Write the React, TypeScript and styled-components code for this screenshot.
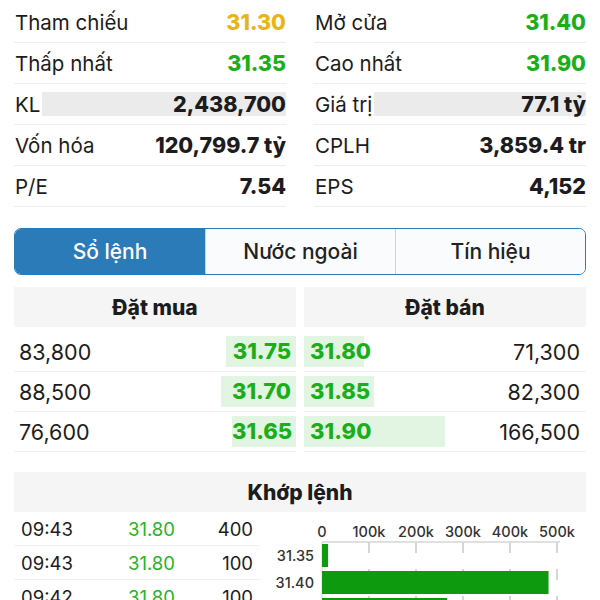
import React from "react";
import styled, { createGlobalStyle } from "styled-components";

const GlobalStyle = createGlobalStyle`
  body {
    margin: 0;
    background: #ffffff;
    font-family: Inter, "Noto Sans", sans-serif;
    color: #1c1c1e;
    overflow: hidden;
  }
`;

const Page = styled.div`
  width: 600px;
  height: 600px;
  padding: 2px 14px 0;
  box-sizing: border-box;
  overflow: hidden;
`;

const StatGrid = styled.div`
  display: grid;
  grid-template-columns: 1fr 1fr;
  column-gap: 28px;
`;

const StatRow = styled.div`
  display: flex;
  align-items: center;
  height: 41px;
  box-sizing: border-box;
  border-bottom: 1px solid #efefef;
`;

const StatLabel = styled.span`
  padding-left: 1px;
  font-size: 20.5px;
  white-space: nowrap;
`;

const StatValue = styled.span<{ $color?: string; $shaded?: boolean }>`
  flex: 1;
  margin-left: 2px;
  height: 24px;
  line-height: 24px;
  text-align: right;
  font-size: 21.5px;
  font-weight: 800;
  white-space: nowrap;
  color: ${(p) => p.$color || "#1c1c1e"};
  background: ${(p) => (p.$shaded ? "#ebebeb" : "transparent")};
`;

const Tabs = styled.div`
  display: grid;
  grid-template-columns: 1fr 1fr 1fr;
  margin-top: 21px;
  height: 47px;
  border: 1.5px solid #2b7bb9;
  border-radius: 7px;
  overflow: hidden;
  box-sizing: border-box;
`;

const Tab = styled.div<{ $active?: boolean }>`
  display: flex;
  align-items: center;
  justify-content: center;
  font-size: 21px;
  font-weight: 500;
  color: ${(p) => (p.$active ? "#ffffff" : "#222")};
  background: ${(p) => (p.$active ? "#2b7bb9" : "#f9fbfd")};
  & + & {
    border-left: 1px solid #c8d3dc;
  }
`;

const Book = styled.div`
  display: grid;
  grid-template-columns: 1fr 1fr;
  column-gap: 8px;
  margin-top: 12px;
`;

const SectionHeader = styled.div`
  display: flex;
  align-items: center;
  justify-content: center;
  height: 40px;
  background: #f5f5f5;
  font-size: 21px;
  font-weight: 800;
`;

const BookRows = styled.div`
  margin-top: 5px;
`;

const BookRow = styled.div`
  display: flex;
  align-items: center;
  justify-content: space-between;
  height: 40px;
  box-sizing: border-box;
  border-bottom: 1px solid #f1f1f1;
`;

const Qty = styled.span<{ $side: "buy" | "sell" }>`
  font-size: 21.5px;
  padding: ${(p) => (p.$side === "buy" ? "0 0 0 5px" : "0 6px 0 0")};
`;

const PriceBar = styled.span<{ $side: "buy" | "sell" }>`
  height: 31px;
  line-height: 31px;
  background: #e2f5e2;
  color: #1aaf1a;
  font-size: 22px;
  font-weight: 800;
  text-align: ${(p) => (p.$side === "buy" ? "right" : "left")};
  padding: ${(p) => (p.$side === "buy" ? "0 5px 0 0" : "0 0 0 6px")};
  box-sizing: border-box;
  white-space: nowrap;
`;

const MatchSection = styled.div`
  margin-top: 20px;
`;

const MatchBody = styled.div`
  display: flex;
  gap: 10px;
`;

const Trades = styled.div`
  width: 246px;
  flex-shrink: 0;
`;

const TradeRow = styled.div`
  display: grid;
  grid-template-columns: 107px 1fr auto;
  align-items: center;
  height: 34px;
  padding: 0 7px;
  box-sizing: border-box;
  border-bottom: 1px solid #f1f1f1;
  font-size: 18.5px;
`;

const TradePrice = styled.span`
  color: #27b327;
`;

const Chart = styled.svg`
  display: block;
  flex-shrink: 0;
  font-family: Inter, sans-serif;
`;

const stats: [string, string, string?, boolean?][][] = [
  [
    ["Tham chiếu", "31.30", "#e8b418"],
    ["Mở cửa", "31.40", "#1aaf1a"],
  ],
  [
    ["Thấp nhất", "31.35", "#1aaf1a"],
    ["Cao nhất", "31.90", "#1aaf1a"],
  ],
  [
    ["KL", "2,438,700", undefined, true],
    ["Giá trị", "77.1 tỷ", undefined, true],
  ],
  [
    ["Vốn hóa", "120,799.7 tỷ"],
    ["CPLH", "3,859.4 tr"],
  ],
  [
    ["P/E", "7.54"],
    ["EPS", "4,152"],
  ],
];

const bids = [
  { qty: "83,800", price: "31.75", w: 70 },
  { qty: "88,500", price: "31.70", w: 75 },
  { qty: "76,600", price: "31.65", w: 64 },
];

const asks = [
  { qty: "71,300", price: "31.80", w: 60 },
  { qty: "82,300", price: "31.85", w: 70 },
  { qty: "166,500", price: "31.90", w: 141 },
];

const trades = [
  ["09:43", "31.80", "400"],
  ["09:43", "31.80", "100"],
  ["09:42", "31.80", "100"],
];

const volume = [
  { price: "31.35", vol: 13000 },
  { price: "31.40", vol: 482000 },
  { price: "31.45", vol: 266000 },
];

const VolumeChart = () => {
  const x0 = 52;
  const scale = 47 / 100000;
  const ticks = [0, 100, 200, 300, 400, 500];
  return (
    <Chart width={316} height={88} viewBox="0 0 316 88">
      {ticks.map((t, i) => (
        <g key={t}>
          <text
            x={x0 + i * 47}
            y={25}
            fontSize={14.5}
            fontWeight={500}
            fill="#333"
            textAnchor="middle"
          >
            {t === 0 ? "0" : `${t}k`}
          </text>
          {i > 0 && (
            <line
              x1={x0 + i * 47}
              x2={x0 + i * 47}
              y1={30}
              y2={88}
              stroke="#c9c9c9"
              strokeWidth={1.5}
              strokeDasharray="11 16"
            />
          )}
        </g>
      ))}
      <line x1={x0} x2={290} y1={30} y2={30} stroke="#d6d6d6" strokeWidth={1.5} />
      <line x1={x0} x2={x0} y1={30} y2={88} stroke="#d6d6d6" strokeWidth={1} />
      {volume.map((v, i) => (
        <g key={v.price}>
          <rect
            x={x0}
            y={32 + i * 27}
            width={Math.max(v.vol * scale, 2)}
            height={23}
            fill="#0e9a0e"
          />
          <text
            x={44}
            y={49 + i * 27}
            fontSize={14.5}
            fontWeight={500}
            fill="#333"
            textAnchor="end"
          >
            {v.price}
          </text>
        </g>
      ))}
    </Chart>
  );
};

const App = () => {
  return (
    <Page>
      <GlobalStyle />
      <StatGrid>
        {stats.map((pair) =>
          pair.map(([label, value, color, shaded]) => (
            <StatRow key={label}>
              <StatLabel>{label}</StatLabel>
              <StatValue $color={color} $shaded={shaded}>
                {value}
              </StatValue>
            </StatRow>
          ))
        )}
      </StatGrid>

      <Tabs>
        <Tab $active>Sổ lệnh</Tab>
        <Tab>Nước ngoài</Tab>
        <Tab>Tín hiệu</Tab>
      </Tabs>

      <Book>
        <div>
          <SectionHeader>Đặt mua</SectionHeader>
          <BookRows>
            {bids.map((b) => (
              <BookRow key={b.price}>
                <Qty $side="buy">{b.qty}</Qty>
                <PriceBar $side="buy" style={{ width: b.w }}>
                  {b.price}
                </PriceBar>
              </BookRow>
            ))}
          </BookRows>
        </div>
        <div>
          <SectionHeader>Đặt bán</SectionHeader>
          <BookRows>
            {asks.map((a) => (
              <BookRow key={a.price}>
                <PriceBar $side="sell" style={{ width: a.w }}>
                  {a.price}
                </PriceBar>
                <Qty $side="sell">{a.qty}</Qty>
              </BookRow>
            ))}
          </BookRows>
        </div>
      </Book>

      <MatchSection>
        <SectionHeader>Khớp lệnh</SectionHeader>
        <MatchBody>
          <Trades>
            {trades.map(([time, price, vol], i) => (
              <TradeRow key={i}>
                <span>{time}</span>
                <TradePrice>{price}</TradePrice>
                <span>{vol}</span>
              </TradeRow>
            ))}
          </Trades>
          <VolumeChart />
        </MatchBody>
      </MatchSection>
    </Page>
  );
};

export default App;
